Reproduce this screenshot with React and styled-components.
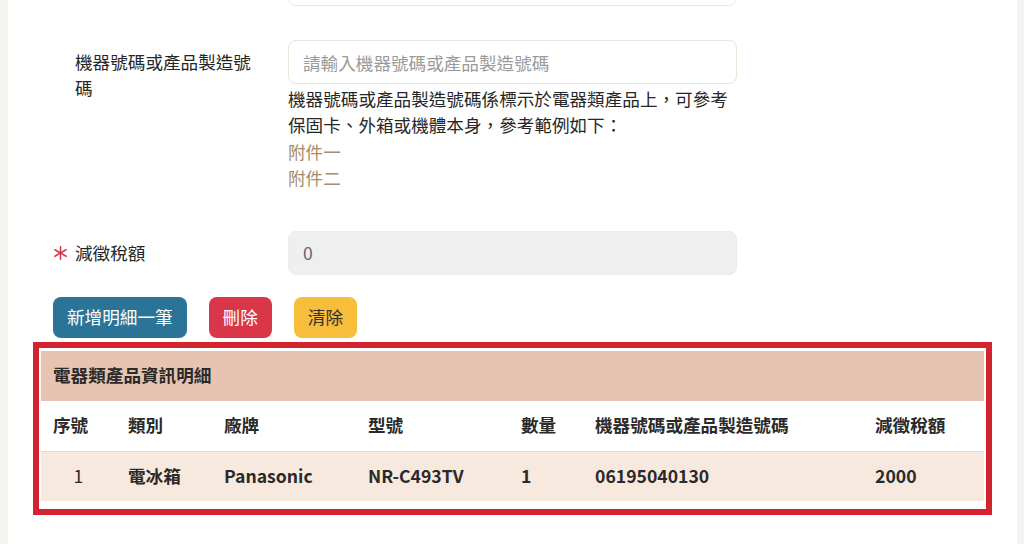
import React from "react";
import styled, { createGlobalStyle } from "styled-components";

const GlobalStyle = createGlobalStyle`
  html, body { margin: 0; padding: 0; }
  body {
    background: #f6f4f0;
    font-family: "Noto Sans CJK TC", "Noto Sans", sans-serif;
    color: #262626;
    overflow: hidden;
  }
  * { box-sizing: border-box; }
`;

const Page = styled.div`
  margin-left: 8px;
  width: 1009px;
  min-height: 544px;
  background: #fff;
  overflow: hidden;
  font-size: 17.6px;
  line-height: 26.4px;
`;

const FieldRow = styled.div`
  display: grid;
  grid-template-columns: 213px 449px;
  margin-left: 67px;
  margin-top: ${(p) => p.$top}px;
`;

const Label = styled.label`
  display: flex;
  align-items: flex-start;
  padding-top: 9px;
  padding-right: 30px;
  color: #262626;
`;

const Star = styled.span`
  display: inline-flex;
  width: 22px;
  margin-left: -22px;
  padding: 6px 0 0 1px;
  flex: none;
`;

const Control = styled.div`
  display: flex;
  flex-direction: column;
`;

const Input = styled.input`
  height: 44px;
  width: 100%;
  border: 1px solid ${(p) => (p.disabled ? "#ececec" : "#ebe5da")};
  background: ${(p) => (p.disabled ? "#efefef" : "#fff")};
  border-radius: 8px;
  padding: 0 14px;
  font: inherit;
  color: #666;
  outline: none;
  &::placeholder { color: #9a9a9a; }
`;

const Help = styled.div`
  margin-top: 2px;
  color: #262626;
`;

const Attach = styled.a`
  display: block;
  color: #a68b68;
  text-decoration: none;
`;

const ButtonRow = styled.div`
  display: flex;
  gap: 22px;
  margin: 22px 0 0 45px;
`;

const Button = styled.button`
  height: 41px;
  padding: 0 14px;
  border: none;
  border-radius: 8px;
  font: inherit;
  background: ${(p) => p.$bg};
  color: ${(p) => p.$fg};
`;

const Highlight = styled.div`
  margin: 4px 0 0 25px;
  width: 959px;
  border: 6px solid #d2232f;
  padding: 3px 2px 8px 2px;
`;

const Table = styled.div`
  width: 943px;
`;

const Caption = styled.div`
  height: 50px;
  display: flex;
  align-items: center;
  padding-left: 12px;
  background: #e7c4b1;
  font-weight: 700;
  color: #2a2a2a;
`;

const Row = styled.div`
  display: grid;
  grid-template-columns: 75px 96px 144px 153px 74px 280px 1fr;
  height: ${(p) => (p.$head ? 51 : 49)}px;
  align-items: center;
  background: ${(p) => (p.$head ? "#fff" : "#f8e9de")};
  border-bottom: ${(p) => (p.$head ? "1px solid #e6d6ca" : "none")};
  font-weight: 700;
  color: #2a2a2a;
`;

const Cell = styled.div`
  padding-left: 12px;
  white-space: nowrap;
  ${(p) => p.$center && "padding-left: 0; text-align: center; font-weight: 400;"}
`;

const StarIcon = () => (
  <svg width="13" height="14" viewBox="0 0 13 14">
    <g stroke="#d8344a" strokeWidth="1.5" strokeLinecap="round">
      <line x1="6.5" y1="0.5" x2="6.5" y2="13.5" />
      <line x1="0.9" y1="3.75" x2="12.1" y2="10.25" />
      <line x1="0.9" y1="10.25" x2="12.1" y2="3.75" />
    </g>
  </svg>
);

const headers = ["序號", "類別", "廠牌", "型號", "數量", "機器號碼或產品製造號碼", "減徵稅額"];
const rows = [["1", "電冰箱", "Panasonic", "NR-C493TV", "1", "06195040130", "2000"]];

export default function App() {
  return (
    <>
      <GlobalStyle />
      <Page>
        <FieldRow $top={-38}>
          <Label />
          <Control>
            <Input readOnly />
          </Control>
        </FieldRow>

        <FieldRow $top={34}>
          <Label>機器號碼或產品製造號碼</Label>
          <Control>
            <Input placeholder="請輸入機器號碼或產品製造號碼" />
            <Help>
              機器號碼或產品製造號碼係標示於電器類產品上，可參考保固卡、外箱或機體本身，參考範例如下：
              <Attach href="#">附件一</Attach>
              <Attach href="#">附件二</Attach>
            </Help>
          </Control>
        </FieldRow>

        <FieldRow $top={39}>
          <Label>
            <Star>
              <StarIcon />
            </Star>
            減徵稅額
          </Label>
          <Control>
            <Input disabled value="0" readOnly />
          </Control>
        </FieldRow>

        <ButtonRow>
          <Button $bg="#2a7597" $fg="#fff">新增明細一筆</Button>
          <Button $bg="#d9364a" $fg="#fff">刪除</Button>
          <Button $bg="#f7bd3b" $fg="#333">清除</Button>
        </ButtonRow>

        <Highlight>
          <Table>
            <Caption>電器類產品資訊明細</Caption>
            <Row $head>
              {headers.map((h) => (
                <Cell key={h}>{h}</Cell>
              ))}
            </Row>
            {rows.map((r, i) => (
              <Row key={i}>
                {r.map((c, j) => (
                  <Cell key={j} $center={j === 0}>
                    {c}
                  </Cell>
                ))}
              </Row>
            ))}
          </Table>
        </Highlight>
      </Page>
    </>
  );
}
